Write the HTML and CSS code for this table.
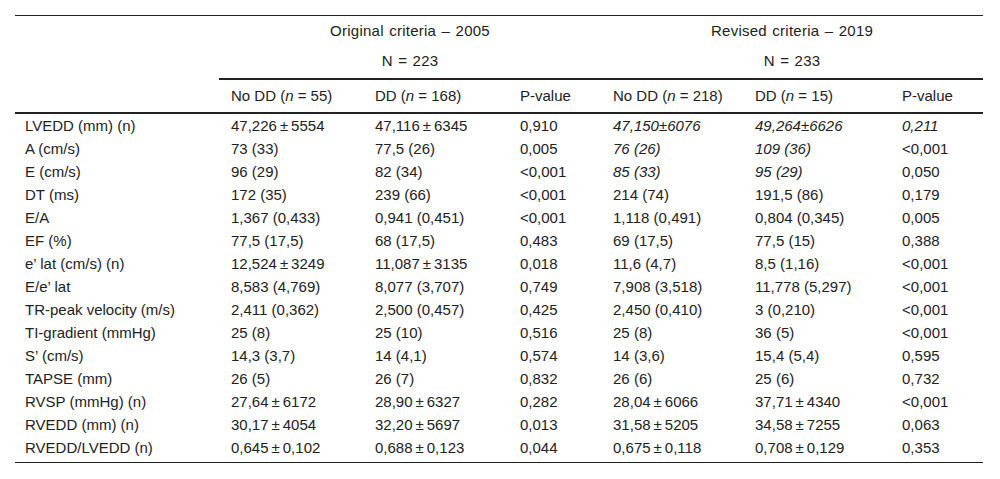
FILE: index.html
```html
<!DOCTYPE html>
<html lang="en">
<head>
<meta charset="utf-8">
<title>Diastolic dysfunction criteria</title>
<link rel="stylesheet" href="styles.css">
</head>
<body>
<div class="wrap">
<table class="tbl">
<colgroup>
<col class="c1"><col class="c2"><col class="c3"><col class="c4"><col class="c5"><col class="c6"><col class="c7">
</colgroup>
<thead>
<tr class="grp">
<th></th>
<th colspan="3" class="center">Original criteria – 2005</th>
<th colspan="3" class="center">Revised criteria – 2019</th>
</tr>
<tr class="grpn">
<th class="blank"></th>
<th colspan="3" class="center ruled">N = 223</th>
<th colspan="3" class="center ruled">N = 233</th>
</tr>
<tr class="hdr">
<th></th>
<th>No DD (<i>n</i> = 55)</th>
<th>DD (<i>n</i> = 168)</th>
<th>P-value</th>
<th>No DD (<i>n</i> = 218)</th>
<th>DD (<i>n</i> = 15)</th>
<th>P-value</th>
</tr>
</thead>
<tbody>
<tr><td>LVEDD (mm) (n)</td><td>47,226&thinsp;±&thinsp;5554</td><td>47,116&thinsp;±&thinsp;6345</td><td>0,910</td><td><i>47,150±6076</i></td><td><i>49,264±6626</i></td><td><i>0,211</i></td></tr>
<tr><td>A (cm/s)</td><td>73 (33)</td><td>77,5 (26)</td><td>0,005</td><td><i>76 (26)</i></td><td><i>109 (36)</i></td><td>&lt;0,001</td></tr>
<tr><td>E (cm/s)</td><td>96 (29)</td><td>82 (34)</td><td>&lt;0,001</td><td><i>85 (33)</i></td><td><i>95 (29)</i></td><td>0,050</td></tr>
<tr><td>DT (ms)</td><td>172 (35)</td><td>239 (66)</td><td>&lt;0,001</td><td>214 (74)</td><td>191,5 (86)</td><td>0,179</td></tr>
<tr><td>E/A</td><td>1,367 (0,433)</td><td>0,941 (0,451)</td><td>&lt;0,001</td><td>1,118 (0,491)</td><td>0,804 (0,345)</td><td>0,005</td></tr>
<tr><td>EF (%)</td><td>77,5 (17,5)</td><td>68 (17,5)</td><td>0,483</td><td>69 (17,5)</td><td>77,5 (15)</td><td>0,388</td></tr>
<tr><td>e’ lat (cm/s) (n)</td><td>12,524&thinsp;±&thinsp;3249</td><td>11,087&thinsp;±&thinsp;3135</td><td>0,018</td><td>11,6 (4,7)</td><td>8,5 (1,16)</td><td>&lt;0,001</td></tr>
<tr><td>E/e’ lat</td><td>8,583 (4,769)</td><td>8,077 (3,707)</td><td>0,749</td><td>7,908 (3,518)</td><td>11,778 (5,297)</td><td>&lt;0,001</td></tr>
<tr><td>TR-peak velocity (m/s)</td><td>2,411 (0,362)</td><td>2,500 (0,457)</td><td>0,425</td><td>2,450 (0,410)</td><td>3 (0,210)</td><td>&lt;0,001</td></tr>
<tr><td>TI-gradient (mmHg)</td><td>25 (8)</td><td>25 (10)</td><td>0,516</td><td>25 (8)</td><td>36 (5)</td><td>&lt;0,001</td></tr>
<tr><td>S’ (cm/s)</td><td>14,3 (3,7)</td><td>14 (4,1)</td><td>0,574</td><td>14 (3,6)</td><td>15,4 (5,4)</td><td>0,595</td></tr>
<tr><td>TAPSE (mm)</td><td>26 (5)</td><td>26 (7)</td><td>0,832</td><td>26 (6)</td><td>25 (6)</td><td>0,732</td></tr>
<tr><td>RVSP (mmHg) (n)</td><td>27,64&thinsp;±&thinsp;6172</td><td>28,90&thinsp;±&thinsp;6327</td><td>0,282</td><td>28,04&thinsp;±&thinsp;6066</td><td>37,71&thinsp;±&thinsp;4340</td><td>&lt;0,001</td></tr>
<tr><td>RVEDD (mm) (n)</td><td>30,17&thinsp;±&thinsp;4054</td><td>32,20&thinsp;±&thinsp;5697</td><td>0,013</td><td>31,58&thinsp;±&thinsp;5205</td><td>34,58&thinsp;±&thinsp;7255</td><td>0,063</td></tr>
<tr class="last"><td>RVEDD/LVEDD (n)</td><td>0,645&thinsp;±&thinsp;0,102</td><td>0,688&thinsp;±&thinsp;0,123</td><td>0,044</td><td>0,675&thinsp;±&thinsp;0,118</td><td>0,708&thinsp;±&thinsp;0,129</td><td>0,353</td></tr>
</tbody>
</table>
</div>
</body>
</html>
```

FILE: styles.css
```css
html, body {
  margin: 0;
  padding: 0;
  background: #fff;
}
.wrap {
  padding: 15px 0 0 15px;
}
.tbl {
  width: 968px;
  table-layout: fixed;
  border-collapse: separate;
  border-spacing: 0;
  border-top: 1px solid #222;
  border-bottom: 1px solid #222;
  font-family: "Liberation Sans", Arial, sans-serif;
  font-size: 15px;
  color: #222;
}
.c1 { width: 204px; }
.c2 { width: 144px; }
.c3 { width: 145px; }
.c4 { width: 93px; }
.c5 { width: 142px; }
.c6 { width: 147px; }
.c7 { width: 93px; }
.tbl th, .tbl td {
  padding: 0 0 0 12px;
  text-align: left;
  font-weight: normal;
  white-space: nowrap;
  vertical-align: top;
}
.tbl td:first-child {
  padding-left: 10px;
}
.tbl .center {
  text-align: center;
  padding-left: 0;
  word-spacing: 1px;
  letter-spacing: 0.25px;
}
.grp th {
  line-height: 30px;
}
.grpn th {
  line-height: 30px;
  padding-bottom: 2px;
}
.grpn th.ruled {
  border-bottom: 2px solid #222;
}
.hdr th {
  line-height: 32px;
  border-bottom: 2px solid #222;
}
.tbl td {
  line-height: 23px;
}
.tbl tr.last td {
  padding-bottom: 3px;
}
```
